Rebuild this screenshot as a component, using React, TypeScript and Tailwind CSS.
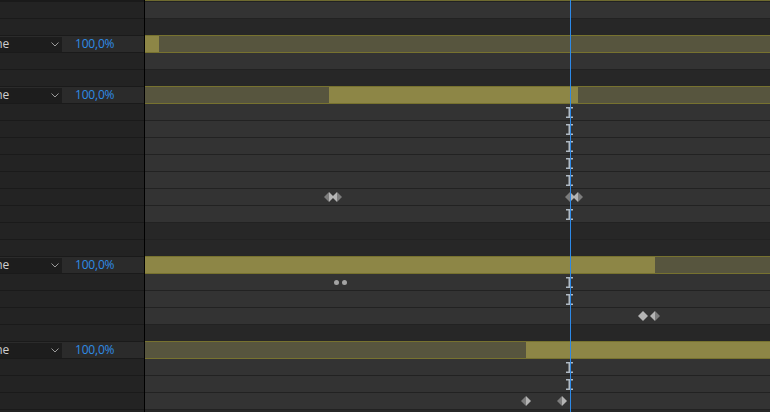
import React from "react";

type Seg = { w: number; on: boolean };
type Mark = { kind: "ibeam" | "key" | "dot"; x: number; shade?: "l" | "r" | "n" };
type Row = { tone: "light" | "dark" | "layer"; segs?: Seg[]; marks?: Mark[] };

const PLAYHEAD = 425;

const ib: Mark = { kind: "ibeam", x: PLAYHEAD };

const rows: Row[] = [
  { tone: "light" },
  { tone: "dark" },
  { tone: "layer", segs: [{ w: 14, on: true }, { w: 611, on: false }] },
  { tone: "light" },
  { tone: "dark" },
  { tone: "layer", segs: [{ w: 184, on: false }, { w: 249, on: true }, { w: 192, on: false }] },
  { tone: "light", marks: [ib] },
  { tone: "light", marks: [ib] },
  { tone: "light", marks: [ib] },
  { tone: "light", marks: [ib] },
  { tone: "light", marks: [ib] },
  {
    tone: "light",
    marks: [
      { kind: "key", x: 184, shade: "l" },
      { kind: "key", x: 192, shade: "r" },
      { kind: "key", x: 425, shade: "l" },
      { kind: "key", x: 433, shade: "r" },
    ],
  },
  { tone: "light", marks: [ib] },
  { tone: "dark" },
  { tone: "dark" },
  { tone: "layer", segs: [{ w: 510, on: true }, { w: 115, on: false }] },
  { tone: "light", marks: [{ kind: "dot", x: 192 }, { kind: "dot", x: 200 }, ib] },
  { tone: "light", marks: [ib] },
  { tone: "light", marks: [{ kind: "key", x: 498, shade: "n" }, { kind: "key", x: 510, shade: "r" }] },
  { tone: "dark" },
  { tone: "layer", segs: [{ w: 381, on: false }, { w: 244, on: true }] },
  { tone: "light", marks: [ib] },
  { tone: "light", marks: [ib] },
  { tone: "light", marks: [{ kind: "key", x: 381, shade: "l" }, { kind: "key", x: 417, shade: "l" }] },
  { tone: "dark" },
];

function IBeam() {
  return (
    <svg width="7" height="11" viewBox="0 0 7 11" className="block">
      <rect x="0" y="0" width="7" height="1.5" fill="#b0bac4" />
      <rect x="0" y="9.5" width="7" height="1.5" fill="#b0bac4" />
      <rect x="2.5" y="0" width="2" height="11" fill="#b0bac4" />
    </svg>
  );
}

function Key({ shade }: { shade: "l" | "r" | "n" }) {
  const left = shade === "l" ? "#7c7c7c" : "#b4b4b4";
  const right = shade === "r" ? "#7c7c7c" : "#b4b4b4";
  return (
    <svg width="10" height="10" viewBox="0 0 10 10" className="block">
      <polygon points="5,0 0,5 5,10" fill={left} />
      <polygon points="5,0 10,5 5,10" fill={right} />
    </svg>
  );
}

function MarkView({ m }: { m: Mark }) {
  if (m.kind === "ibeam") {
    return (
      <div className="absolute top-[3px]" style={{ left: m.x - 4 }}>
        <IBeam />
      </div>
    );
  }
  if (m.kind === "dot") {
    return (
      <div
        className="absolute top-[6px] h-[5px] w-[5px] rounded-full bg-[#a4a4a4]"
        style={{ left: m.x - 3 }}
      />
    );
  }
  return (
    <div className="absolute top-[3px]" style={{ left: m.x - 5 }}>
      <Key shade={m.shade ?? "n"} />
    </div>
  );
}

function Separator({ olive }: { olive: boolean }) {
  return (
    <div className="flex h-px shrink-0">
      <div className="w-[144px] bg-[#1a1a1a]" />
      <div className="w-px bg-black" />
      <div className={olive ? "flex-1 bg-[#77722f]" : "flex-1 bg-[#222222]"} />
    </div>
  );
}

function LayerControls() {
  return (
    <div className="flex h-full items-center bg-[#2b2b2b]">
      <div className="flex h-[15px] w-[62px] items-center overflow-hidden bg-[#1d1d1d]">
        <span className="ml-[-21px] whitespace-nowrap text-[12px] leading-none text-[#cfcfcf]">
          None
        </span>
        <svg width="8" height="5" viewBox="0 0 8 5" className="ml-auto mr-[3px] block">
          <polyline points="0.5,0.5 4,4 7.5,0.5" fill="none" stroke="#9a9a9a" strokeWidth="1" />
        </svg>
      </div>
      <span className="ml-[13px] text-[12px] leading-none tracking-[-0.2px] text-[#2f8be6]">
        100,0%
      </span>
    </div>
  );
}

function RowView({ row }: { row: Row }) {
  const bg =
    row.tone === "light" ? "bg-[#333333]" : row.tone === "dark" ? "bg-[#272727]" : "bg-[#57553e]";
  return (
    <div className="flex h-[16px] shrink-0">
      <div className="w-[144px] bg-[#232323]">{row.tone === "layer" && <LayerControls />}</div>
      <div className="w-px bg-black" />
      <div className={`relative flex flex-1 overflow-hidden ${bg}`}>
        {row.segs?.map((s, i) => (
          <div
            key={i}
            className={s.on ? "h-full shrink-0 bg-[#8d8646]" : "h-full shrink-0 bg-[#57553e]"}
            style={{ width: s.w }}
          />
        ))}
        {row.marks?.map((m, i) => <MarkView key={i} m={m} />)}
      </div>
    </div>
  );
}

export default function App() {
  return (
    <div className="relative flex h-[412px] w-[770px] flex-col overflow-hidden bg-[#232323] font-['Open_Sans',sans-serif]">
      <div className="flex h-px shrink-0">
        <div className="w-[144px] bg-[#1a1a1a]" />
        <div className="w-px bg-black" />
        <div className="flex-1 bg-[#6e6a30]" />
      </div>
      <Separator olive={false} />
      {rows.map((row, i) => {
        const next = rows[i + 1];
        const olive = row.tone === "layer" || next?.tone === "layer";
        return (
          <React.Fragment key={i}>
            <RowView row={row} />
            <Separator olive={olive} />
          </React.Fragment>
        );
      })}
      {/* playhead */}
      <div className="absolute bottom-0 top-0 left-[570px] w-px bg-[#2d8ae8]" />
    </div>
  );
}
